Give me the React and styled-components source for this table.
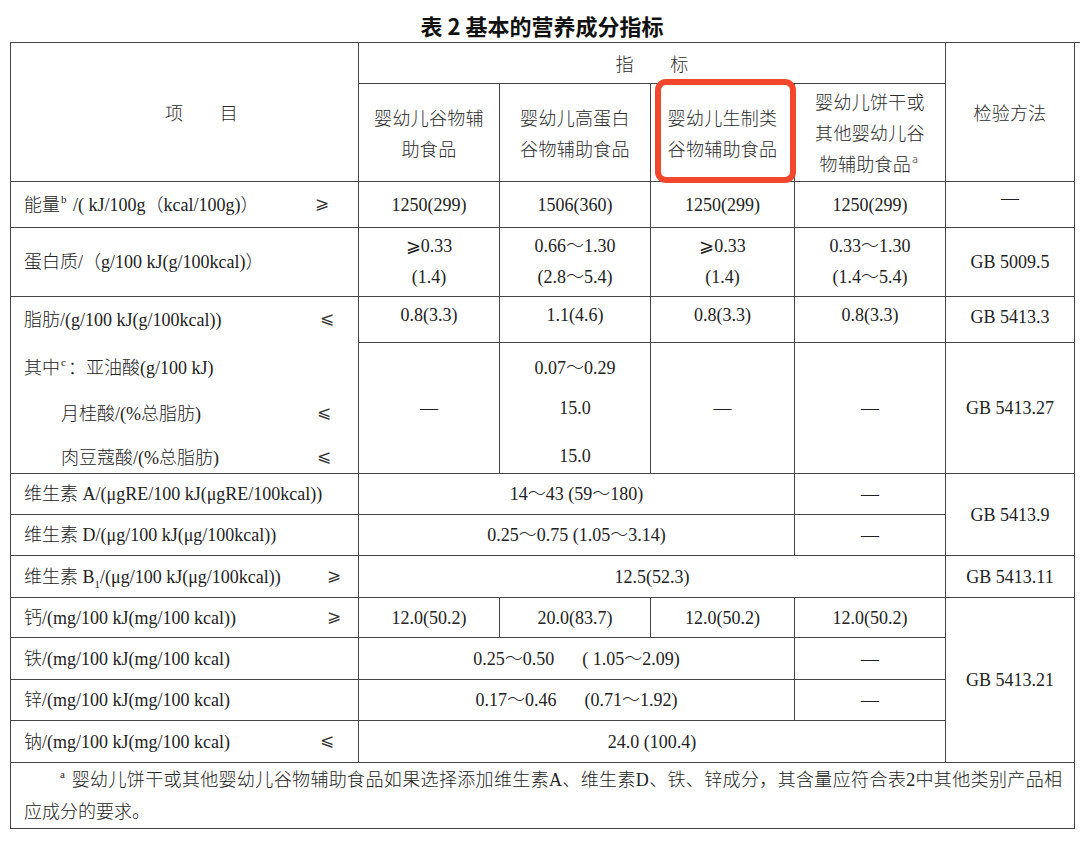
import React from "react";
import styled, { createGlobalStyle } from "styled-components";

const Global = createGlobalStyle`
  html, body { margin: 0; padding: 0; background: #ffffff; }
  body {
    font-family: "Liberation Serif", "Noto Sans CJK SC", serif;
    color: #222222;
  }
`;

const LINE = "#454545";

const Page = styled.div`
  width: 1080px;
  height: 841px;
  padding-left: 10px;
  box-sizing: border-box;
`;

const Title = styled.h1`
  margin: 0;
  width: 1064px;
  height: 42px;
  box-sizing: border-box;
  padding-top: 14px;
  font-family: "Noto Sans CJK SC", sans-serif;
  font-weight: 700;
  font-size: 22px;
  line-height: 22px;
  text-align: center;
  color: #111111;
`;

const Table = styled.div`
  display: grid;
  grid-template-columns: 348px 141px 151px 144px 151px 129px;
  grid-template-rows: 41px 98px 46px 69px 46px 131px 41px 41px 42px 40px 42px 41px 42px 66px;
  border-top: 1px solid ${LINE};
  border-left: 1px solid ${LINE};
  font-size: 18px;
  font-weight: 300;
`;

const Cell = styled.div`
  grid-column: ${(p) => p.$c} / span ${(p) => p.$cs || 1};
  grid-row: ${(p) => p.$r} / span ${(p) => p.$rs || 1};
  border-right: 1px solid ${LINE};
  border-bottom: 1px solid ${LINE};
  box-sizing: border-box;
  position: relative;
  display: flex;
  flex-direction: column;
  justify-content: center;
  align-items: center;
  text-align: center;
  line-height: ${(p) => p.$lh || 22}px;
  padding-bottom: ${(p) => p.$lift || 0}px;
  padding-left: ${(p) => p.$pl || 0}px;
  white-space: nowrap;
`;

const HeadCell = styled(Cell)`
  font-family: "Noto Sans CJK SC", sans-serif;
  letter-spacing: 0.3px;
  color: #2a2a2a;
  line-height: 31px;
`;

const ItemCell = styled(Cell)`
  flex-direction: row;
  justify-content: flex-start;
  padding-left: 13px;
  padding-right: ${(p) => p.$pr || 13}px;
`;

const ItemStack = styled(Cell)`
  justify-content: flex-start;
  align-items: stretch;
  padding-top: 12px;
`;

const ItemLine = styled.div`
  display: flex;
  align-items: center;
  height: 22px;
  flex-shrink: 0;
  margin-top: ${(p) => p.$mt || 0}px;
  padding-left: ${(p) => 13 + (p.$indent || 0)}px;
  padding-right: ${(p) => p.$pr || 13}px;
`;

const ValueStack = styled(Cell)`
  justify-content: flex-start;
  padding-top: 14px;
`;

const ValueLine = styled.div`
  height: 22px;
  flex-shrink: 0;
  margin-top: ${(p) => p.$mt || 0}px;
`;

const Sign = styled.span`
  margin-left: auto;
  font-family: "DejaVu Sans", "Noto Sans CJK SC", sans-serif;
  font-weight: 300;
  font-size: 17px;
  color: #333333;
  position: relative;
  top: -2px;
`;

const Sup = styled.sup`
  font-size: 11px;
  line-height: 0;
  position: relative;
  top: -1px;
  margin: 0 2px 0 1px;
`;

const Sub = styled.sub`
  font-size: 11px;
  line-height: 0;
  position: relative;
  top: 1px;
`;

const Gap = styled.span`
  display: inline-block;
  width: ${(p) => p.$w}px;
`;

const Highlight = styled.span`
  position: absolute;
  left: 4px;
  right: -2px;
  top: -5px;
  bottom: -2px;
  border: 6px solid #f2462d;
  border-radius: 11px;
  z-index: 2;
  pointer-events: none;
`;

const Footnote = styled.div`
  grid-column: 1 / span 6;
  grid-row: 14;
  border-right: 1px solid ${LINE};
  border-bottom: 1px solid ${LINE};
  box-sizing: border-box;
  padding: 1px 12px 0 13px;
  line-height: 32px;
  white-space: nowrap;
`;

const FootLine = styled.div`
  text-indent: ${(p) => (p.$first ? 35 : 0)}px;
  text-align: ${(p) => (p.$first ? "justify" : "left")};
  text-align-last: ${(p) => (p.$first ? "justify" : "left")};
  white-space: normal;
`;

const Dash = () => <span>—</span>;

export default function App() {
  return (
    <>
      <Global />
      <Page>
        <Title>表 2 基本的营养成分指标</Title>
        <Table>
          {/* header */}
          <HeadCell $c={1} $r={1} $rs={2} $pl={34}>项　　目</HeadCell>
          <HeadCell $c={2} $r={1} $cs={4}>指　　标</HeadCell>
          <HeadCell $c={6} $r={1} $rs={2}>检验方法</HeadCell>
          <HeadCell $c={2} $r={2}>婴幼儿谷物辅<br />助食品</HeadCell>
          <HeadCell $c={3} $r={2}>婴幼儿高蛋白<br />谷物辅助食品</HeadCell>
          <HeadCell $c={4} $r={2}>
            婴幼儿生制类<br />谷物辅助食品
            <Highlight />
          </HeadCell>
          <HeadCell $c={5} $r={2}>
            婴幼儿饼干或<br />其他婴幼儿谷<br />
            <span>物辅助食品<Sup>a</Sup></span>
          </HeadCell>

          {/* energy */}
          <ItemCell $c={1} $r={3} $pr={29}>
            <span>能量<Sup>b</Sup> /( kJ/100g（kcal/100g)）</span>
            <Sign>⩾</Sign>
          </ItemCell>
          <Cell $c={2} $r={3}>1250(299)</Cell>
          <Cell $c={3} $r={3}>1506(360)</Cell>
          <Cell $c={4} $r={3}>1250(299)</Cell>
          <Cell $c={5} $r={3}>1250(299)</Cell>
          <Cell $c={6} $r={3} $lift={14}><Dash /></Cell>

          {/* protein */}
          <ItemCell $c={1} $r={4}>
            <span>蛋白质/（g/100 kJ(g/100kcal)）</span>
          </ItemCell>
          <Cell $c={2} $r={4} $lh={31}><span>⩾0.33</span><span>(1.4)</span></Cell>
          <Cell $c={3} $r={4} $lh={31}><span>0.66～1.30</span><span>(2.8～5.4)</span></Cell>
          <Cell $c={4} $r={4} $lh={31} $pl={-10}><span>⩾0.33</span><span>(1.4)</span></Cell>
          <Cell $c={5} $r={4} $lh={31}><span>0.33～1.30</span><span>(1.4～5.4)</span></Cell>
          <Cell $c={6} $r={4}>GB 5009.5</Cell>

          {/* fat + fatty acids */}
          <ItemStack $c={1} $r={5} $rs={2}>
            <ItemLine $pr={24}>
              <span>脂肪/(g/100 kJ(g/100kcal))</span>
              <Sign>⩽</Sign>
            </ItemLine>
            <ItemLine $mt={26}>
              <span>其中<Sup>c</Sup>：亚油酸(g/100 kJ)</span>
            </ItemLine>
            <ItemLine $mt={24} $indent={37} $pr={27}>
              <span>月桂酸/(%总脂肪)</span>
              <Sign>⩽</Sign>
            </ItemLine>
            <ItemLine $mt={22} $indent={37} $pr={27}>
              <span>肉豆蔻酸/(%总脂肪)</span>
              <Sign>⩽</Sign>
            </ItemLine>
          </ItemStack>
          <Cell $c={2} $r={5} $lift={10}>0.8(3.3)</Cell>
          <Cell $c={3} $r={5} $lift={10}>1.1(4.6)</Cell>
          <Cell $c={4} $r={5} $lift={10}>0.8(3.3)</Cell>
          <Cell $c={5} $r={5} $lift={10}>0.8(3.3)</Cell>
          <Cell $c={6} $r={5} $lift={6}>GB 5413.3</Cell>

          <Cell $c={2} $r={6}><Dash /></Cell>
          <ValueStack $c={3} $r={6}>
            <ValueLine>0.07～0.29</ValueLine>
            <ValueLine $mt={18}>15.0</ValueLine>
            <ValueLine $mt={26}>15.0</ValueLine>
          </ValueStack>
          <Cell $c={4} $r={6}><Dash /></Cell>
          <Cell $c={5} $r={6}><Dash /></Cell>
          <Cell $c={6} $r={6}>GB 5413.27</Cell>

          {/* vitamin A */}
          <ItemCell $c={1} $r={7}>
            <span>维生素 A/(μgRE/100 kJ(μgRE/100kcal))</span>
          </ItemCell>
          <Cell $c={2} $r={7} $cs={3}>14～43 (59～180)</Cell>
          <Cell $c={5} $r={7}><Dash /></Cell>
          <Cell $c={6} $r={7} $rs={2}>GB 5413.9</Cell>

          {/* vitamin D */}
          <ItemCell $c={1} $r={8}>
            <span>维生素 D/(μg/100 kJ(μg/100kcal))</span>
          </ItemCell>
          <Cell $c={2} $r={8} $cs={3}>0.25～0.75 (1.05～3.14)</Cell>
          <Cell $c={5} $r={8}><Dash /></Cell>

          {/* vitamin B1 */}
          <ItemCell $c={1} $r={9} $pr={17}>
            <span>维生素 B<Sub>1</Sub>/(μg/100 kJ(μg/100kcal))</span>
            <Sign>⩾</Sign>
          </ItemCell>
          <Cell $c={2} $r={9} $cs={4}>12.5(52.3)</Cell>
          <Cell $c={6} $r={9}>GB 5413.11</Cell>

          {/* calcium */}
          <ItemCell $c={1} $r={10} $pr={17}>
            <span>钙/(mg/100 kJ(mg/100 kcal))</span>
            <Sign>⩾</Sign>
          </ItemCell>
          <Cell $c={2} $r={10}>12.0(50.2)</Cell>
          <Cell $c={3} $r={10}>20.0(83.7)</Cell>
          <Cell $c={4} $r={10}>12.0(50.2)</Cell>
          <Cell $c={5} $r={10}>12.0(50.2)</Cell>
          <Cell $c={6} $r={10} $rs={4}>GB 5413.21</Cell>

          {/* iron */}
          <ItemCell $c={1} $r={11}>
            <span>铁/(mg/100 kJ(mg/100 kcal)</span>
          </ItemCell>
          <Cell $c={2} $r={11} $cs={3}>
            <span>0.25～0.50<Gap $w={28} />( 1.05～2.09)</span>
          </Cell>
          <Cell $c={5} $r={11}><Dash /></Cell>

          {/* zinc */}
          <ItemCell $c={1} $r={12}>
            <span>锌/(mg/100 kJ(mg/100 kcal)</span>
          </ItemCell>
          <Cell $c={2} $r={12} $cs={3}>
            <span>0.17～0.46<Gap $w={28} />(0.71～1.92)</span>
          </Cell>
          <Cell $c={5} $r={12}><Dash /></Cell>

          {/* sodium */}
          <ItemCell $c={1} $r={13} $pr={24}>
            <span>钠/(mg/100 kJ(mg/100 kcal)</span>
            <Sign>⩽</Sign>
          </ItemCell>
          <Cell $c={2} $r={13} $cs={4}>24.0 (100.4)</Cell>

          <Footnote>
            <FootLine $first>
              <Sup>a</Sup> 婴幼儿饼干或其他婴幼儿谷物辅助食品如果选择添加维生素A、维生素D、铁、锌成分，其含量应符合表2中其他类别产品相
            </FootLine>
            <FootLine>应成分的要求。</FootLine>
          </Footnote>
        </Table>
      </Page>
    </>
  );
}
